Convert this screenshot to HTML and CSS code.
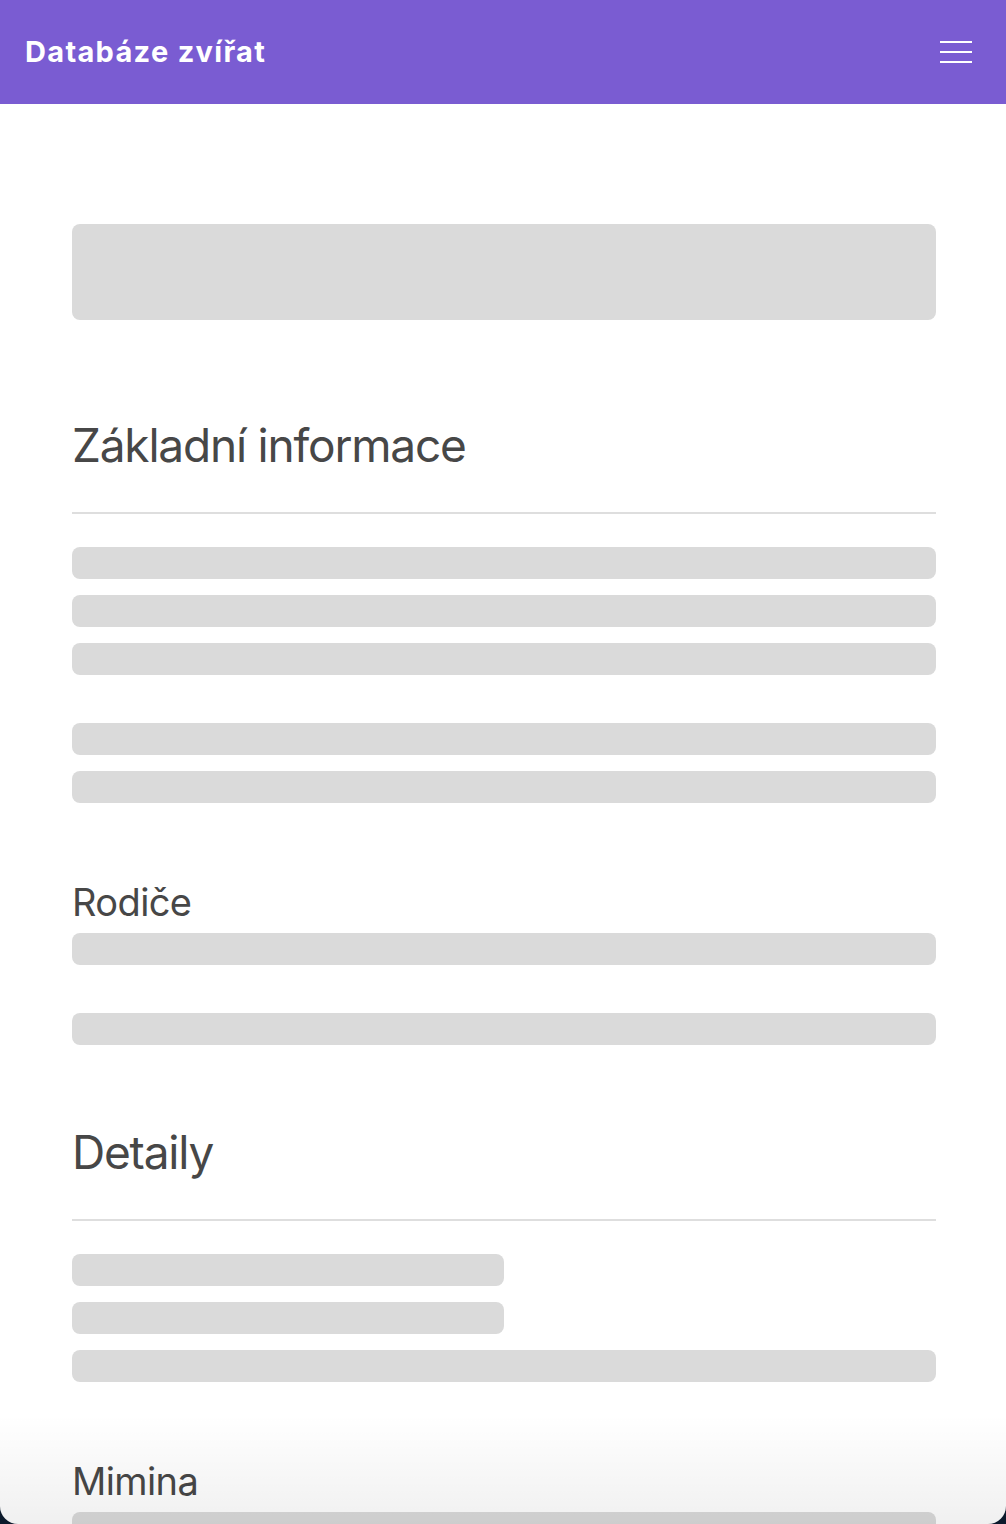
FILE: index.html
```html
<!DOCTYPE html>
<html lang="cs">
<head>
<meta charset="utf-8">
<title>Databáze zvířat</title>
<link rel="stylesheet" href="styles.css">
</head>
<body>
<div class="screen">
  <header class="topbar">
    <div class="brand">Databáze zvířat</div>
    <button class="menu" aria-label="Menu">
      <svg width="32" height="24" viewBox="0 0 32 24"><rect x="0" y="1" width="32" height="2" fill="#fff"/><rect x="0" y="11" width="32" height="2" fill="#fff"/><rect x="0" y="21" width="32" height="2" fill="#fff"/></svg>
    </button>
  </header>
  <main class="content">
    <div class="sk sk-hero"></div>

    <h2 class="section-title">Základní informace</h2>
    <hr class="divider">
    <div class="group">
      <div class="sk sk-line"></div>
      <div class="sk sk-line"></div>
      <div class="sk sk-line"></div>
    </div>
    <div class="group group-next">
      <div class="sk sk-line"></div>
      <div class="sk sk-line"></div>
    </div>

    <h3 class="sub-title">Rodiče</h3>
    <div class="sk sk-line"></div>
    <div class="sk sk-line sk-spaced"></div>

    <h2 class="section-title section-title-2">Detaily</h2>
    <hr class="divider">
    <div class="group">
      <div class="sk sk-line sk-half"></div>
      <div class="sk sk-line sk-half"></div>
      <div class="sk sk-line"></div>
    </div>

    <h3 class="sub-title">Mimina</h3>
    <div class="sk sk-line"></div>
    <div class="sk sk-line sk-spaced"></div>
  </main>
  <div class="fade"></div>
</div>
</body>
</html>
```

FILE: styles.css
```css
html, body {
  margin: 0;
  padding: 0;
}
body {
  background: #0c1a2c;
  font-family: Inter, "Noto Sans", sans-serif;
}
.screen {
  position: relative;
  height: 1524px;
  overflow: hidden;
  background: #fff;
  border-radius: 0 0 18px 18px;
}
.topbar {
  height: 104px;
  background: #7a5cd2;
  display: flex;
  align-items: center;
  justify-content: space-between;
  padding: 0 34px 0 25px;
  box-sizing: border-box;
}
.brand {
  color: #fff;
  font-weight: 700;
  font-size: 29px;
  letter-spacing: 1.3px;
  margin-top: -2px;
}
.menu {
  border: 0;
  background: none;
  padding: 0;
  display: flex;
  margin-top: 0;
}
.content {
  padding: 120px 70px 0 72px;
}
.sk {
  background: #dadada;
  border-radius: 8px;
}
.sk-hero {
  height: 96px;
}
.sk-line {
  height: 32px;
}
.group {
  display: flex;
  flex-direction: column;
  gap: 16px;
}
.group-next {
  margin-top: 48px;
}
.sk-half {
  width: 432px;
}
.sk-spaced {
  margin-top: 48px;
}
.section-title {
  margin: 97px 0 0;
  font-size: 46px;
  line-height: 56px;
  font-weight: 400;
  letter-spacing: -1.2px;
  color: #474747;
}
.section-title-2 {
  margin-top: 79px;
}
.divider {
  margin: 39px 0 33px;
  border: 0;
  height: 2px;
  background: #dedede;
}
.sub-title {
  margin: 77px 0 9px;
  font-size: 38px;
  line-height: 44px;
  font-weight: 400;
  letter-spacing: -0.6px;
  color: #474747;
}
.fade {
  position: absolute;
  left: 0;
  right: 0;
  bottom: 0;
  height: 110px;
  background: linear-gradient(to bottom, rgba(0,0,0,0), rgba(0,0,0,0.06));
  pointer-events: none;
}
```
